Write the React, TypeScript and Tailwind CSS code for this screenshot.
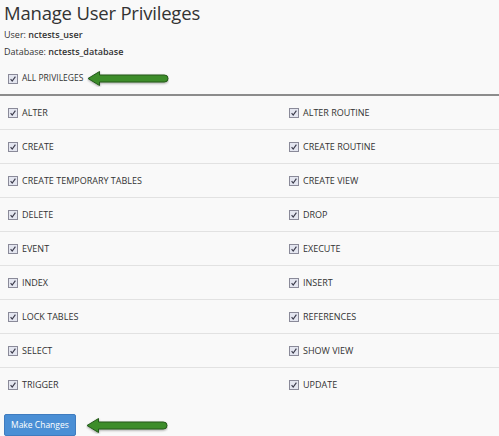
import React from 'react';

const left = ['ALTER', 'CREATE', 'CREATE TEMPORARY TABLES', 'DELETE', 'EVENT', 'INDEX', 'LOCK TABLES', 'SELECT', 'TRIGGER'];
const right = ['ALTER ROUTINE', 'CREATE ROUTINE', 'CREATE VIEW', 'DROP', 'EXECUTE', 'INSERT', 'REFERENCES', 'SHOW VIEW', 'UPDATE'];

function Check() {
  return (
    <span className="inline-flex h-[10px] w-[10px] shrink-0 items-center justify-center border border-[#8a8a99] bg-[#e4e6f0]">
      <svg viewBox="0 0 10 10" className="h-[8px] w-[8px]">
        <path d="M2 5.2 L4 7.6 L8 2" fill="none" stroke="#3a3a4a" strokeWidth="1.4" />
      </svg>
    </span>
  );
}

function Arrow() {
  return (
    <svg width="82" height="17" viewBox="0 0 82 17" className="shrink-0">
      <defs>
        <filter id="sh" x="-10%" y="-30%" width="120%" height="160%">
          <feDropShadow dx="0" dy="1" stdDeviation="0.8" floodColor="#000" floodOpacity="0.35" />
        </filter>
      </defs>
      <path
        d="M1 8.5 L12.5 1.5 L12.5 5 L77.5 5 Q81 5 81 8.5 Q81 12 77.5 12 L12.5 12 L12.5 15.5 Z"
        fill="#3c8d2a"
        stroke="#24591a"
        strokeWidth="1"
        strokeLinejoin="round"
        filter="url(#sh)"
      />
    </svg>
  );
}

function Item({ label }: { label: string }) {
  return (
    <div className="flex items-center gap-[4px] pl-[8px]">
      <Check />
      <span>{label}</span>
    </div>
  );
}

export default function App() {
  return (
    <div
      className="h-[436px] w-[499px] overflow-hidden bg-[#f9f9f9] text-[#333]"
      style={{ fontFamily: '"Open Sans", "Liberation Sans", sans-serif' }}
    >
      <h1 className="pl-[4px] text-[18.5px] leading-[26px] tracking-[-0.2px] text-[#333]">Manage User Privileges</h1>
      <div className="pl-[4px] text-[9px] leading-[17px]">
        <div>
          User: <b className="font-semibold">nctests_user</b>
        </div>
        <div>
          Database: <b className="font-semibold">nctests_database</b>
        </div>
      </div>
      <div className="mt-[8px] flex h-[21px] items-center gap-[4px] pl-[8px] text-[8.5px]">
        <Check />
        <span>ALL PRIVILEGES</span>
        <Arrow />
      </div>
      <div className="mt-[5px] h-[2px] bg-[#8c8c8c]" />
      <div className="text-[9px]">
        {left.map((l, i) => (
          <div
            key={l}
            className={`grid h-[34px] grid-cols-[281px_1fr] items-center ${i < left.length - 1 ? 'border-b border-[#e2e2e2]' : ''}`}
          >
            <Item label={l} />
            <Item label={right[i]} />
          </div>
        ))}
      </div>
      <div className="mt-[12px] flex items-center gap-[10px] pl-[4px]">
        <button className="h-[22px] rounded-[2px] border border-[#3f7cbf] bg-[#4a8fd5] px-[6px] text-[8.5px] text-white">
          Make Changes
        </button>
        <Arrow />
      </div>
    </div>
  );
}
